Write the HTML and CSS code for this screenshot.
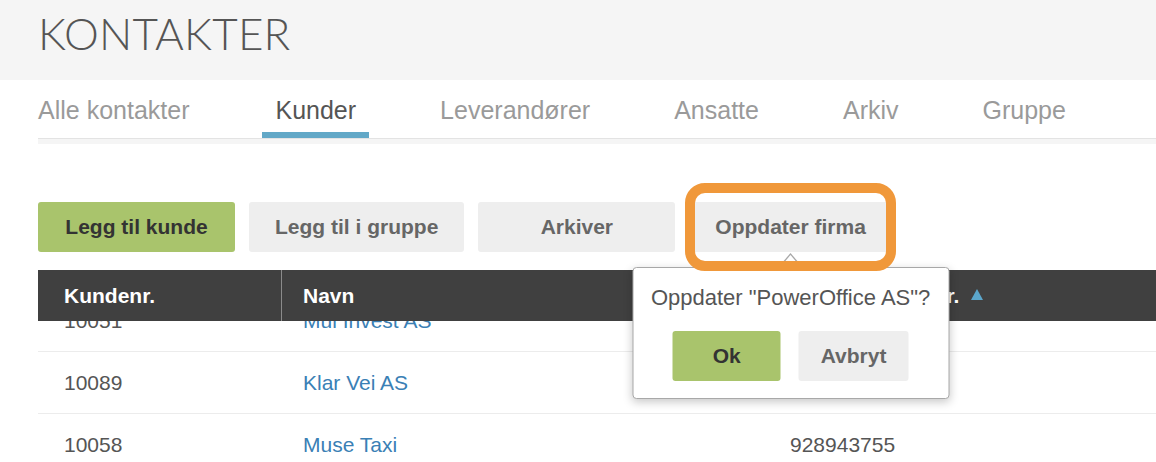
FILE: index.html
```html
<!DOCTYPE html>
<html lang="no">
<head>
<meta charset="utf-8">
<title>Kontakter</title>
<link rel="stylesheet" href="styles.css">
</head>
<body>
<header class="page-head">
  <h1 class="title">KONTAKTER</h1>
</header>
<nav class="tabs">
  <a class="tab">Alle kontakter</a>
  <a class="tab active">Kunder</a>
  <a class="tab">Leverandører</a>
  <a class="tab">Ansatte</a>
  <a class="tab">Arkiv</a>
  <a class="tab">Gruppe</a>
</nav>
<main class="content">
  <div class="actions">
    <button class="btn btn-primary">Legg til kunde</button>
    <button class="btn">Legg til i gruppe</button>
    <button class="btn">Arkiver</button>
    <div class="confirm-wrap">
      <button class="btn">Oppdater firma</button>
      <span class="highlight"></span>
      <div class="popover">
        <p class="popover-text">Oppdater "PowerOffice AS"?</p>
        <div class="popover-actions">
          <button class="btn btn-primary pop-btn">Ok</button>
          <button class="btn pop-btn">Avbryt</button>
        </div>
      </div>
    </div>
  </div>
  <div class="table">
    <div class="thead">
      <div class="th th-first">Kundenr.</div>
      <div class="th">Navn</div>
      <div class="th th-sorted">Mobiltelefonnr.<svg class="sort-icon" width="12" height="11" viewBox="0 0 12 11"><path d="M6 0 L12 11 L0 11 Z" fill="#5ba6cb"/></svg></div>
    </div>
    <div class="tbody">
      <div class="row first-row">
        <div class="td">10051</div>
        <div class="td"><a class="link">Mui Invest AS</a></div>
        <div class="td">41256833</div>
      </div>
      <div class="row">
        <div class="td">10089</div>
        <div class="td"><a class="link">Klar Vei AS</a></div>
        <div class="td">90441276</div>
      </div>
      <div class="row">
        <div class="td">10058</div>
        <div class="td"><a class="link">Muse Taxi</a></div>
        <div class="td">928943755</div>
      </div>
    </div>
  </div>
</main>
</body>
</html>
```
FILE: styles.css
```css
html, body {
  margin: 0;
  padding: 0;
}
body {
  font-family: "Liberation Sans", Arial, sans-serif;
  background: #fff;
  overflow: hidden;
}

.page-head {
  height: 80px;
  box-sizing: border-box;
  background: #f5f5f5;
  padding: 11px 0 0 38px;
}
.title {
  margin: 0;
  font-family: Lato, "Open Sans", sans-serif;
  font-weight: 300;
  font-size: 44px;
  line-height: 1;
  color: #555;
  letter-spacing: 0.2px;
}

.tabs {
  display: flex;
  gap: 58px;
  margin-left: 38px;
  height: 59px;
  box-sizing: border-box;
  border-bottom: 1px solid #e3e3e3;
  box-shadow: 0 5px 0 #f5f5f5;
}
.tab {
  display: flex;
  align-items: center;
  padding: 8px 13px 0;
  font-size: 25px;
  color: #9a9a9a;
  border-bottom: 6px solid transparent;
  text-decoration: none;
}
.tab:first-child {
  margin-left: -13px;
  margin-right: 2px;
}
.tab.active {
  color: #555;
  border-bottom-color: #62a8c7;
}

.content {
  padding: 63px 0 0 38px;
}

.actions {
  display: flex;
  gap: 14px;
}
.btn {
  height: 50px;
  min-width: 197px;
  padding: 0 26px;
  border: 0;
  border-radius: 3px;
  background: #eeeeee;
  color: #666;
  font-family: "Liberation Sans", Arial, sans-serif;
  font-weight: bold;
  font-size: 21px;
  white-space: nowrap;
}
.btn-primary {
  background: #a9c46c;
  color: #333;
}

.confirm-wrap {
  position: relative;
  display: flex;
}
.highlight {
  position: absolute;
  left: -4px;
  right: -4px;
  top: -19px;
  bottom: -19px;
  border: 10px solid #f0983a;
  border-radius: 20px;
  z-index: 3;
  pointer-events: none;
}
.popover {
  position: absolute;
  top: calc(100% + 15px);
  left: 50%;
  transform: translateX(-50%);
  width: 317px;
  box-sizing: border-box;
  padding: 17px 0;
  background: #fff;
  border: 1px solid #a8a8a8;
  border-radius: 4px;
  box-shadow: 0 3px 10px rgba(0, 0, 0, 0.22);
  z-index: 2;
  display: flex;
  flex-direction: column;
  gap: 20px;
}
.popover::before {
  content: "";
  position: absolute;
  top: -15px;
  left: 50%;
  margin-left: -12px;
  border-left: 12px solid transparent;
  border-right: 12px solid transparent;
  border-bottom: 14px solid #a8a8a8;
}
.popover::after {
  content: "";
  position: absolute;
  top: -13px;
  left: 50%;
  margin-left: -11px;
  border-left: 11px solid transparent;
  border-right: 11px solid transparent;
  border-bottom: 13px solid #fff;
}
.popover-text {
  margin: 0;
  font-size: 22px;
  line-height: 26px;
  color: #555;
  text-align: center;
  white-space: nowrap;
}
.popover-actions {
  display: flex;
  justify-content: center;
  gap: 18px;
}
.pop-btn {
  min-width: 108px;
  padding: 0 22px;
}

.table {
  margin-top: 18px;
}
.thead {
  display: grid;
  grid-template-columns: 244px 488px 1fr;
  height: 51px;
  background: #404040;
  color: #fff;
  font-weight: bold;
  font-size: 21px;
}
.th {
  display: flex;
  align-items: center;
  padding-left: 21px;
  white-space: nowrap;
}
.th-first {
  padding-left: 26px;
  border-right: 1px solid #8b8b8b;
}
.th-sorted {
  padding-left: 40px;
}
.sort-icon {
  margin-left: 12px;
  margin-top: -2px;
}

.tbody {
  height: 160px;
  overflow: hidden;
}
.row {
  display: grid;
  grid-template-columns: 244px 488px 1fr;
  height: 62px;
  box-sizing: border-box;
  border-bottom: 1px solid #ececec;
  align-items: center;
  font-size: 21px;
  color: #555;
}
.first-row {
  margin-top: -31px;
}
.td {
  padding-left: 21px;
  white-space: nowrap;
}
.td:first-child {
  padding-left: 26px;
}
.td:last-child {
  padding-left: 20px;
}
.link {
  color: #3a80b5;
  text-decoration: none;
}
```
